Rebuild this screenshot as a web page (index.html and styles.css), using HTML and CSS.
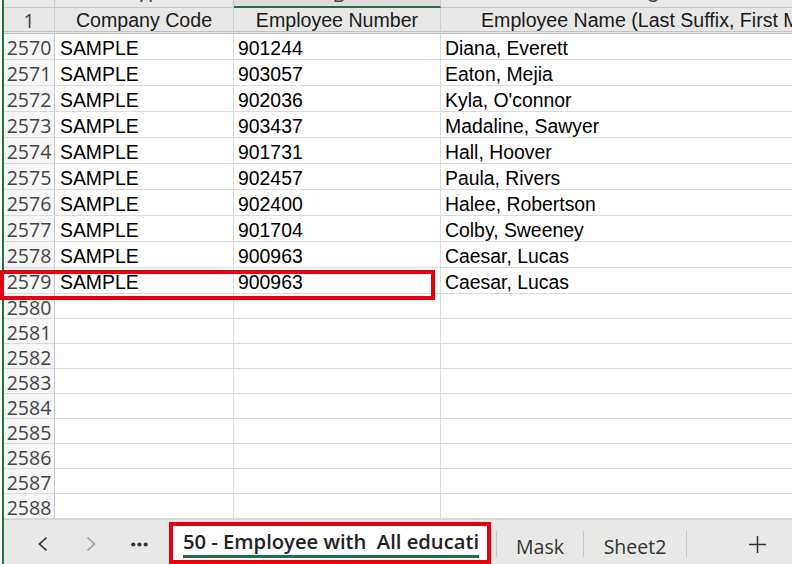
FILE: index.html
```html
<!DOCTYPE html>
<html>
<head>
<meta charset="utf-8">
<link rel="stylesheet" href="styles.css">
</head>
<body>
<div class="window">
  <div class="sheet">
    <div class="row colhead">
      <div class="cell rh"></div>
      <div class="cell"><span class="letter">A</span></div>
      <div class="cell sel"><span class="letter">B</span></div>
      <div class="cell"><span class="letter">C</span></div>
    </div>
    <div class="row hdr">
      <div class="cell rh">1</div>
      <div class="cell">Company Code</div>
      <div class="cell">Employee Number</div>
      <div class="cell c-head">Employee Name (Last Suffix, First Middle)</div>
    </div>
    <div class="row data"><div class="cell rh">2570</div><div class="cell a">SAMPLE</div><div class="cell">901244</div><div class="cell">Diana, Everett</div></div>
    <div class="row data"><div class="cell rh">2571</div><div class="cell a">SAMPLE</div><div class="cell">903057</div><div class="cell">Eaton, Mejia</div></div>
    <div class="row data"><div class="cell rh">2572</div><div class="cell a">SAMPLE</div><div class="cell">902036</div><div class="cell">Kyla, O'connor</div></div>
    <div class="row data"><div class="cell rh">2573</div><div class="cell a">SAMPLE</div><div class="cell">903437</div><div class="cell">Madaline, Sawyer</div></div>
    <div class="row data"><div class="cell rh">2574</div><div class="cell a">SAMPLE</div><div class="cell">901731</div><div class="cell">Hall, Hoover</div></div>
    <div class="row data"><div class="cell rh">2575</div><div class="cell a">SAMPLE</div><div class="cell">902457</div><div class="cell">Paula, Rivers</div></div>
    <div class="row data"><div class="cell rh">2576</div><div class="cell a">SAMPLE</div><div class="cell">902400</div><div class="cell">Halee, Robertson</div></div>
    <div class="row data"><div class="cell rh">2577</div><div class="cell a">SAMPLE</div><div class="cell">901704</div><div class="cell">Colby, Sweeney</div></div>
    <div class="row data"><div class="cell rh">2578</div><div class="cell a">SAMPLE</div><div class="cell">900963</div><div class="cell">Caesar, Lucas</div></div>
    <div class="row data"><div class="cell rh">2579</div><div class="cell a">SAMPLE</div><div class="cell">900963</div><div class="cell">Caesar, Lucas</div></div>
    <div class="row empty"><div class="cell rh">2580</div><div class="cell"></div><div class="cell"></div><div class="cell"></div></div>
    <div class="row empty"><div class="cell rh">2581</div><div class="cell"></div><div class="cell"></div><div class="cell"></div></div>
    <div class="row empty"><div class="cell rh">2582</div><div class="cell"></div><div class="cell"></div><div class="cell"></div></div>
    <div class="row empty"><div class="cell rh">2583</div><div class="cell"></div><div class="cell"></div><div class="cell"></div></div>
    <div class="row empty"><div class="cell rh">2584</div><div class="cell"></div><div class="cell"></div><div class="cell"></div></div>
    <div class="row empty"><div class="cell rh">2585</div><div class="cell"></div><div class="cell"></div><div class="cell"></div></div>
    <div class="row empty"><div class="cell rh">2586</div><div class="cell"></div><div class="cell"></div><div class="cell"></div></div>
    <div class="row empty"><div class="cell rh">2587</div><div class="cell"></div><div class="cell"></div><div class="cell"></div></div>
    <div class="row empty"><div class="cell rh">2588</div><div class="cell"></div><div class="cell"></div><div class="cell"></div></div>
  </div>
  <div class="mark"></div>
  <div class="tabbar">
    <div class="nav">
      <svg width="10" height="14" viewBox="0 0 10 14"><polyline points="8.5,0.7 1.5,7 8.5,13.3" fill="none" stroke="#333" stroke-width="1.6"/></svg>
    </div>
    <div class="nav">
      <svg width="10" height="14" viewBox="0 0 10 14"><polyline points="1.5,0.7 8.5,7 1.5,13.3" fill="none" stroke="#a3a3a3" stroke-width="1.6"/></svg>
    </div>
    <div class="nav">
      <svg width="17" height="5" viewBox="0 0 17 5"><circle cx="2.3" cy="2.5" r="2.1" fill="#333"/><circle cx="8.5" cy="2.5" r="2.1" fill="#333"/><circle cx="14.7" cy="2.5" r="2.1" fill="#333"/></svg>
    </div>
    <div class="tab-active"><span class="tab-label">50 - Employee with  All educati</span></div>
    <div class="sep first"></div>
    <div class="tab mask">Mask</div>
    <div class="sep"></div>
    <div class="tab sheet2">Sheet2</div>
    <div class="sep"></div>
    <div class="add">
      <svg width="19" height="19" viewBox="0 0 19 19"><path d="M9.5 1v17M1 9.5h17" stroke="#333" stroke-width="1.5" fill="none"/></svg>
    </div>
  </div>
</div>
</body>
</html>
```
FILE: styles.css
```css
* { box-sizing: border-box; }

body {
  margin: 0;
  width: 792px;
  height: 564px;
  overflow: hidden;
  background: #fff;
}

.window {
  position: relative;
  margin-left: 2px;
  border-left: 2px solid #217346;
  width: 880px;
  height: 564px;
  display: flex;
  flex-direction: column;
}

.sheet {
  flex: none;
  height: 519px;
  overflow: hidden;
}

.row {
  display: grid;
  grid-template-columns: 51px 179px 207px 420px;
}

.cell {
  border-right: 1px solid #dadada;
  border-bottom: 1px solid #dadada;
  font-family: "Liberation Sans", Arial, sans-serif;
  font-size: 19.4px;
  color: #000;
  padding-left: 4px;
  white-space: nowrap;
}

.cell.a { padding-left: 5px; }

.cell.rh {
  background: #f6f6f6;
  border-right: 1px solid #c6c6c6;
  font-family: "Open Sans", "Noto Sans", sans-serif;
  font-size: 19.5px;
  color: #444;
  text-align: center;
  padding-left: 0;
}

/* column letters row (mostly scrolled off) */
.colhead .cell {
  height: 8px;
  overflow: hidden;
  background: #e8e8e8;
  border-bottom: 1px solid #c8c8c8;
  border-right-color: #c8c8c8;
  text-align: center;
  font-size: 18px;
  color: #444;
}

.colhead .cell.sel {
  background: #dedede;
  border-bottom: 2px solid #217346;
}

.letter {
  display: block;
  line-height: 18px;
  margin-top: -13px;
}

/* header row 1 */
.hdr .cell {
  height: 26px;
  background: #e7e7e7;
  border-bottom: 3px double #c2c2c2;
  border-right-color: #cdcdcd;
  font-size: 19.6px;
  line-height: 21px;
  padding-top: 2px;
  padding-left: 0;
  text-align: center;
  color: #1a1a1a;
}

.hdr .cell.c-head {
  text-align: left;
  padding-left: 40px;
}

.hdr .cell.rh {
  font-size: 19.5px;
  color: #444;
}

.data .cell {
  height: 26px;
  line-height: 22px;
  padding-top: 3px;
}

.empty .cell {
  height: 25px;
  line-height: 21px;
  padding-top: 3px;
}

/* red annotation around row 2579 */
.mark {
  position: absolute;
  left: -4px;
  top: 270px;
  width: 435px;
  height: 30px;
  border: 4px solid #e3000f;
}

/* sheet tab bar */
.tabbar {
  flex: 1;
  border-top: 1px solid #d4d4d4;
  background: #e8e9e7;
  display: flex;
  align-items: center;
  padding-left: 15px;
  font-family: "Open Sans", "Noto Sans", sans-serif;
}

.nav {
  width: 48px;
  display: flex;
  justify-content: center;
  align-items: center;
  margin-top: 4px;
}

.tab-active {
  align-self: flex-end;
  height: 42px;
  width: 322px;
  margin-left: 6px;
  border: 4px solid #e3000f;
  background: #fff;
  padding-left: 10px;
  display: flex;
  align-items: flex-end;
  padding-bottom: 2px;
  overflow: hidden;
}

.tab-label {
  font-size: 20.2px;
  font-weight: 600;
  color: #222;
  white-space: pre;
  line-height: 22px;
  padding-bottom: 3px;
  border-bottom: 3px solid #1e7145;
}

.sep {
  width: 1px;
  height: 26px;
  background: #c6c6c6;
  margin-top: 4px;
}

.sep.first { margin-left: 5px; }

.tab {
  align-self: stretch;
  display: flex;
  align-items: center;
  justify-content: center;
  padding-top: 10px;
  font-size: 19.5px;
  color: #333;
  line-height: 26px;
}

.tab.mask { width: 86px; }
.tab.sheet2 { width: 102px; }

.add {
  margin-left: 61px;
  margin-top: 4px;
  display: flex;
}
```
